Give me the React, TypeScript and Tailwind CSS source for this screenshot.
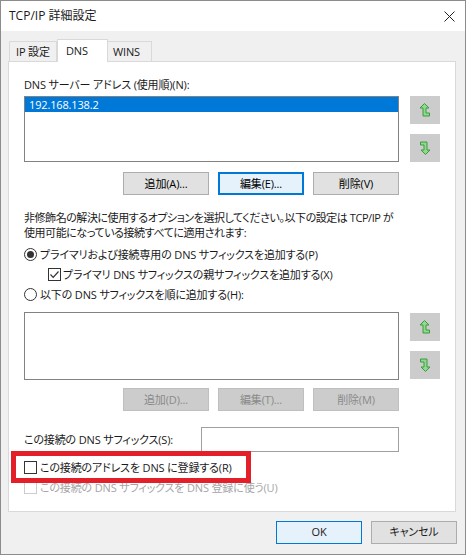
import React from 'react';

const font = "[font-family:'Open_Sans','Noto_Sans_CJK_JP',sans-serif] [font-feature-settings:'palt'] tracking-[-0.15px]";

function UpArrow() {
  return (
    <svg width="10" height="14" viewBox="0 0 10 14">
      <polygon
        points="4,0.5 8.5,5 5.5,5 5.5,10 9,10 9,13 2.5,13 2.5,5 -0.5,5"
        transform="translate(0.5 0)"
        fill="#8fd88f"
        stroke="#3c9a3c"
        strokeWidth="1"
        strokeLinejoin="miter"
      />
    </svg>
  );
}

function DownArrow() {
  return (
    <svg width="10" height="14" viewBox="0 0 10 14" style={{ transform: 'rotate(180deg)' }}>
      <polygon
        points="4,0.5 8.5,5 5.5,5 5.5,10 9,10 9,13 2.5,13 2.5,5 -0.5,5"
        transform="translate(0.5 0)"
        fill="#8fd88f"
        stroke="#3c9a3c"
        strokeWidth="1"
      />
    </svg>
  );
}

function MoveButtons({ second }: { second?: boolean }) {
  return (
    <div className={second ? 'flex flex-col gap-[10px] mt-[1px]' : 'flex flex-col gap-[10px]'}>
      <div className="w-[30px] h-[28px] bg-[#cccccc] flex items-center justify-center">
        <UpArrow />
      </div>
      <div className="w-[30px] h-[28px] bg-[#cccccc] flex items-center justify-center">
        <DownArrow />
      </div>
    </div>
  );
}

function Btn({ label, focus, disabled }: { label: string; focus?: boolean; disabled?: boolean }) {
  let cls = 'w-[86px] h-[23px] flex items-center justify-center border bg-[#e1e1e1] border-[#adadad] text-black';
  if (focus) cls = 'w-[86px] h-[23px] flex items-center justify-center border-2 bg-[#e5f1fb] border-[#0078d7] text-black';
  if (disabled) cls = 'w-[86px] h-[23px] flex items-center justify-center border bg-[#cccccc] border-[#bfbfbf] text-[#8a8a8a]';
  return <div className={cls}>{label}</div>;
}

function Radio({ checked }: { checked?: boolean }) {
  return (
    <div className="w-[13px] h-[13px] rounded-full border border-[#333333] bg-white flex items-center justify-center shrink-0">
      {checked && <div className="w-[7px] h-[7px] rounded-full bg-[#333333]" />}
    </div>
  );
}

function Check({ checked, disabled }: { checked?: boolean; disabled?: boolean }) {
  return (
    <div
      className={
        disabled
          ? 'w-[13px] h-[13px] border border-[#cccccc] bg-white shrink-0'
          : 'w-[13px] h-[13px] border border-[#333333] bg-white shrink-0 flex items-center justify-center'
      }
    >
      {checked && (
        <svg width="11" height="11" viewBox="0 0 11 11">
          <polyline points="1.5,5.5 4.2,8.3 9.5,2.5" fill="none" stroke="#333333" strokeWidth="1.2" />
        </svg>
      )}
    </div>
  );
}

export default function App() {
  return (
    <div className={`relative w-[466px] h-[555px] bg-[#f0f0f0] border border-[#8c8c8c] text-[11px] text-[#1a1a1a] flex flex-col ${font}`}>
      {/* title bar */}
      <div className="h-[30px] bg-white flex items-center justify-between pl-[8px] pr-[10px]">
        <span className="text-[12px] tracking-normal">TCP/IP 詳細設定</span>
        <svg width="11" height="11" viewBox="0 0 11 11">
          <path d="M0.5 0.5 L10.5 10.5 M10.5 0.5 L0.5 10.5" stroke="#222" strokeWidth="1" />
        </svg>
      </div>

      <div className="pl-[7px] pt-[8px] flex flex-col">
        {/* tabs */}
        <div className="flex items-end h-[22px] leading-[15px]">
          <div className="ml-[1px] w-[48px] h-[20px] border border-b-0 border-[#d9d9d9] bg-[#f0f0f0] flex items-center pl-[6px]">
            IP 設定
          </div>
          <div className="relative z-10 w-[51px] h-[23px] mb-[-1px] border border-b-0 border-[#d9d9d9] bg-white flex items-start pt-[3px] pl-[8px]">
            DNS
          </div>
          <div className="w-[44px] h-[20px] border border-b-0 border-l-0 border-[#d9d9d9] bg-[#f0f0f0] flex items-center pl-[5px]">
            WINS
          </div>
        </div>

        {/* panel */}
        <div className="w-[448px] h-[451px] bg-white border border-[#d9d9d9] pl-[15px] pt-[15px] flex flex-col leading-[15px]">
          <div className="h-[15px] whitespace-nowrap">DNS サーバー アドレス (使用順)(N):</div>

          <div className="mt-[4px] flex gap-[11px]">
            <div className="w-[375px] h-[66px] border border-[#828282] bg-white">
              <div className="h-[15px] bg-[#0078d7] text-white pl-[4px]">192.168.138.2</div>
            </div>
            <MoveButtons />
          </div>

          <div className="mt-[10px] w-[375px] flex justify-end gap-[9px]">
            <Btn label="追加(A)..." />
            <Btn label="編集(E)..." focus />
            <Btn label="削除(V)" />
          </div>

          <div className="mt-[15px] whitespace-nowrap tracking-[-0.45px]">
            非修飾名の解決に使用するオプションを選択してください。以下の設定は TCP/IP が
            <br />
            使用可能になっている接続すべてに適用されます:
          </div>

          <div className="mt-[7px] h-[15px] flex items-center gap-[3px] whitespace-nowrap">
            <Radio checked />
            <span>プライマリおよび接続専用の DNS サフィックスを追加する(P)</span>
          </div>

          <div className="mt-[5px] h-[15px] ml-[24px] flex items-center gap-[2px] whitespace-nowrap">
            <Check checked />
            <span>プライマリ DNS サフィックスの親サフィックスを追加する(X)</span>
          </div>

          <div className="mt-[5px] h-[15px] flex items-center gap-[3px] whitespace-nowrap">
            <Radio />
            <span>以下の DNS サフィックスを順に追加する(H):</span>
          </div>

          <div className="mt-[10px] flex gap-[11px]">
            <div className="w-[375px] h-[68px] border border-[#828282] bg-white" />
            <MoveButtons second />
          </div>

          <div className="mt-[8px] w-[375px] flex justify-end gap-[9px]">
            <Btn label="追加(D)..." disabled />
            <Btn label="編集(T)..." disabled />
            <Btn label="削除(M)" disabled />
          </div>

          <div className="mt-[16px] flex items-center">
            <div className="w-[177px] whitespace-nowrap">この接続の DNS サフィックス(S):</div>
            <div className="w-[198px] h-[25px] border border-[#a0a0a0] bg-white" />
          </div>

          <div className="mt-[8px] h-[15px] flex items-center gap-[3px] whitespace-nowrap">
            <Check />
            <span>この接続のアドレスを DNS に登録する(R)</span>
          </div>

          <div className="mt-[5px] h-[15px] flex items-center gap-[3px] whitespace-nowrap text-[#a6a6a6]">
            <Check disabled />
            <span>この接続の DNS サフィックスを DNS 登録に使う(U)</span>
          </div>
        </div>

        {/* dialog buttons */}
        <div className="mt-[9px] w-[449px] flex justify-end gap-[9px]">
          <div className="w-[86px] h-[23px] flex items-center justify-center border border-[#0078d7] bg-[#e5f1fb]">OK</div>
          <div className="w-[86px] h-[23px] flex items-center justify-center border border-[#adadad] bg-[#e1e1e1]">キャンセル</div>
        </div>
      </div>

      {/* red highlight annotation */}
      <div className="absolute left-[10px] top-[450px] w-[240px] h-[32px] border-[5px] border-[#e3202a]" />
    </div>
  );
}
